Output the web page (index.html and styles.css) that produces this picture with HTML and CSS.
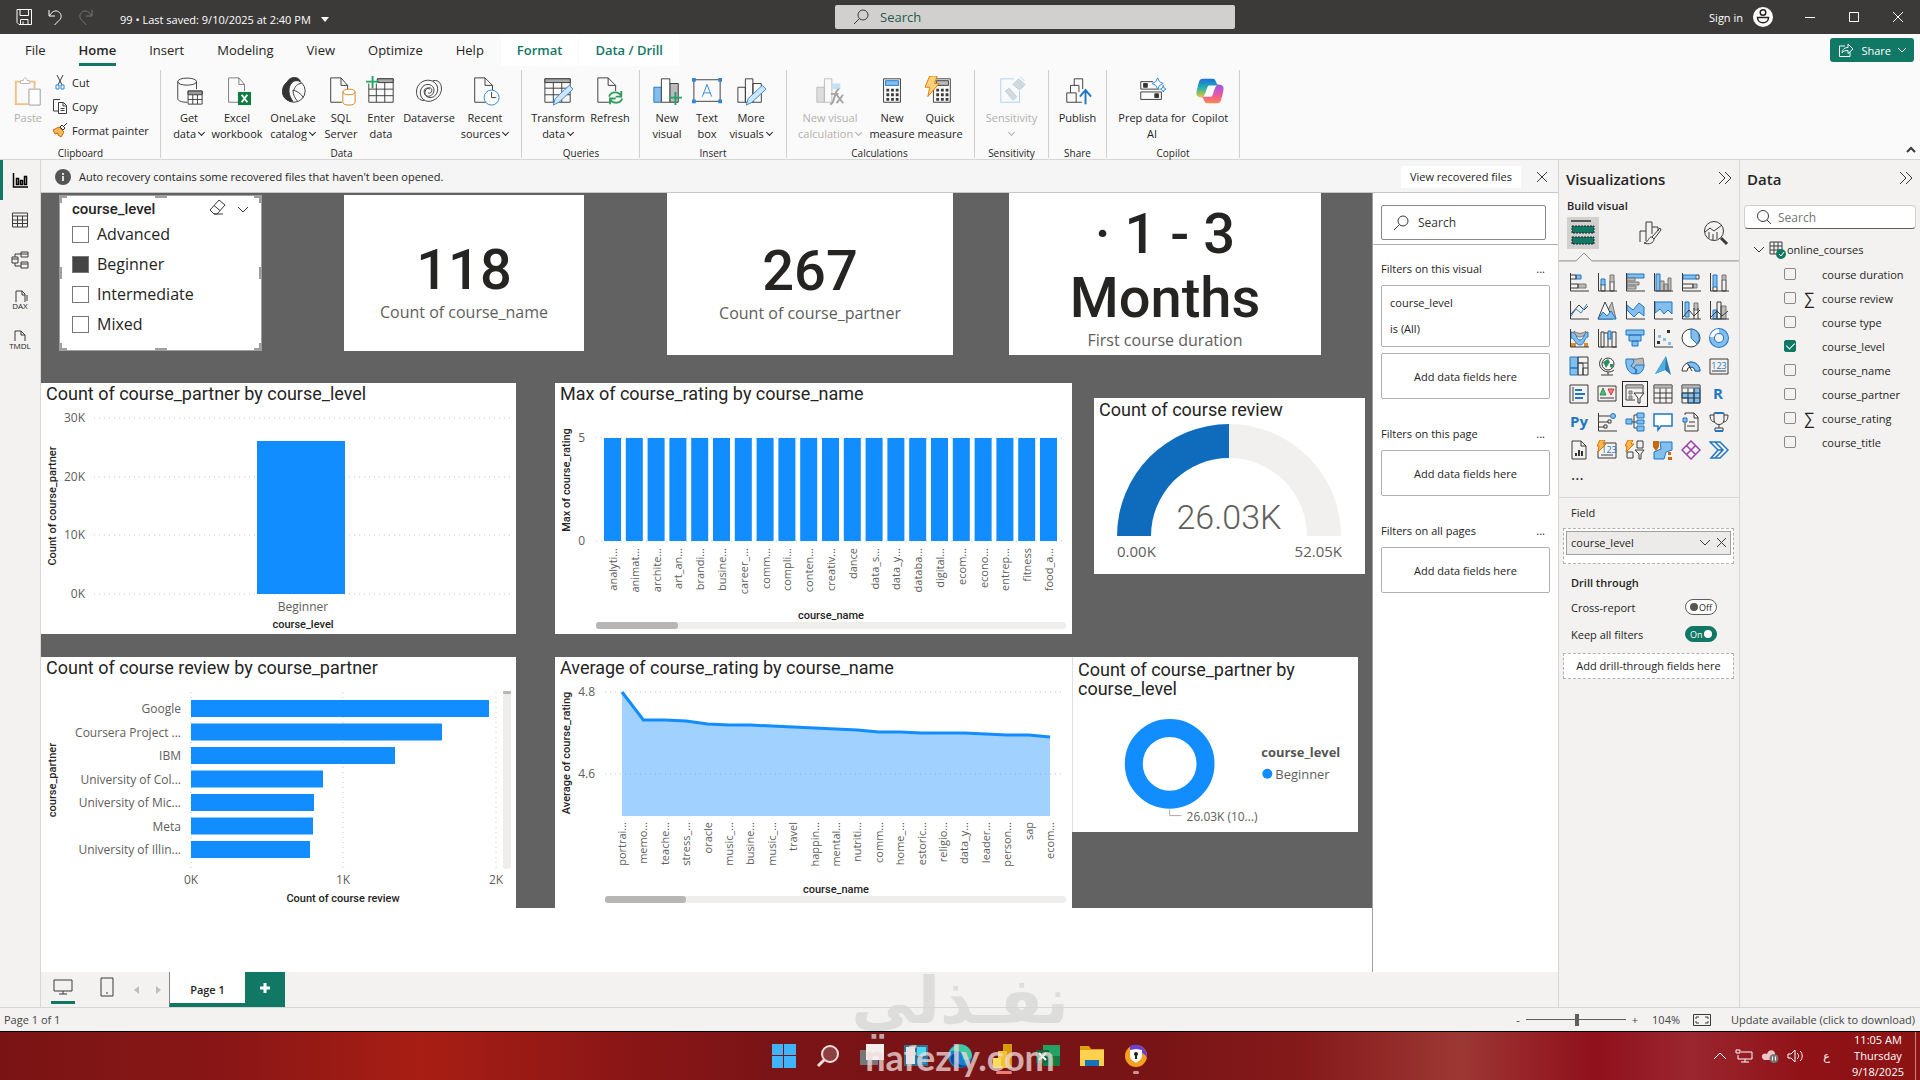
FILE: index.html
```html
<!DOCTYPE html>
<html lang="en">
<head>
  <meta charset="UTF-8">
  <title>99 - Power BI Desktop</title>
  <link rel="stylesheet" href="styles.css">
</head>
<body>
  <header class="titlebar">
    <div class="quick">
      <button aria-label="Save"><svg width="20" height="20" viewBox="0 0 20 20" class="w"><path d="M3 2.500h14.500v15H5l-2-2zM6 2.500v6h8.500v-6M6.500 17.500v-5h7.500v5M9 17v-2.500"/></svg></button>
      <button aria-label="Undo"><svg width="20" height="20" viewBox="0 0 20 20" class="w"><path d="M4 3v6h6M4.500 8.500C8 3 12 3 14.500 5.500s2 6-.5 8L9.500 18"/></svg></button>
      <button aria-label="Redo" class="dim"><svg width="20" height="20" viewBox="0 0 20 20" class="w"><path d="M16 3v6h-6M15.500 8.500C12 3 8 3 5.500 5.500s-2 6 .5 8l4.500 4.500"/></svg></button>
    </div>
    <button class="doc-name">99 • Last saved: 9/10/2025 at 2:40 PM <svg width="8" height="5" viewBox="0 0 8 5"><path d="M0 0h8L4 5z" fill="#fff"/></svg></button>
    <label class="top-search">
      <svg width="18" height="18" viewBox="0 0 18 18" class="k"><circle cx="11" cy="7" r="5"/><path d="M7.500 10.500L2 16"/></svg>
      <input type="text" placeholder="Search" aria-label="Search">
    </label>
    <div class="account">
      <span>Sign in</span>
      <svg width="20" height="20" viewBox="0 0 20 20"><circle cx="10" cy="10" r="10" fill="#fff"/><circle cx="10" cy="5.500" r="2.800" fill="none" stroke="#222" stroke-width="1.500"/><path d="M4.500 10.500h11c0 7-11 7-11 0z" fill="none" stroke="#222" stroke-width="1.500"/></svg>
    </div>
    <div class="win-buttons">
      <button aria-label="Minimize"><svg width="12" height="12" viewBox="0 0 12 12" class="w"><path d="M1 6.500h10"/></svg></button>
      <button aria-label="Maximize"><svg width="12" height="12" viewBox="0 0 12 12" class="w"><path d="M1.500 1.500h9v9h-9z"/></svg></button>
      <button aria-label="Close"><svg width="12" height="12" viewBox="0 0 12 12" class="w"><path d="M1 1l10 10M11 1L1 11"/></svg></button>
    </div>
  </header>

  <section class="ribbon">
    <nav class="tabs">
      <button>File</button>
      <button class="active">Home</button>
      <button>Insert</button>
      <button>Modeling</button>
      <button>View</button>
      <button>Optimize</button>
      <button>Help</button>
      <button class="context">Format</button>
      <button class="context">Data / Drill</button>
      <button class="share"><svg width="18" height="18" viewBox="0 0 18 18" class="w"><path d="M8 5H2.500v10.500H13V11M5 12c.5-4 3-5.500 6-5.500V3l5 5-5 4.500V9.500C8 9.500 6.500 10 5 12z"/></svg> Share <svg width="10" height="8" viewBox="0 0 10 8" class="w"><path d="M1 2l4 4 4-4"/></svg></button>
    </nav>
    <div class="groups">
      <div class="group g-clip">
        <div class="tools">
          <button class="tool off"><svg viewBox="0 0 32 32"><path d="M10 6H3v24h13M23 13V6h-6" fill="none" stroke="#f3c083" stroke-width="2"/><path d="M8 8V5h3c0-4 4-4 4 0h3v3z" fill="#fff" stroke="#b5b3b1"/><path d="M17 14h12v17H17z" fill="#fff" stroke="#9a9896"/></svg>Paste</button>
          <div class="clip-list">
            <button><svg width="16" height="16" viewBox="0 0 16 16" class="k"><path d="M5 1l5 10M11 1L6 11"/><path d="M4 11h3v4H4zM9 11h3v4H9z" stroke="#2b88d8"/></svg>Cut</button>
            <button><svg width="16" height="16" viewBox="0 0 16 16" class="k"><path d="M6 13H1.500V1.500H8M6.500 4.500h5l3 3v8h-8zM11 4.500V8h3M8.500 10.500h4M8.500 12.500h4"/></svg>Copy</button>
            <button><svg width="16" height="16" viewBox="0 0 16 16" class="k"><path d="M1 8l6-3 5 5-3 5-3-2 0-2-3 1z" fill="#f8b65c" stroke="#ca6b09"/><path d="M8 5l2-2 3 3-2 2zM12 4l3-3"/></svg>Format painter</button>
          </div>
        </div>
        <span class="cap">Clipboard</span>
      </div>
      <div class="group g-data">
        <div class="tools">
          <button class="tool"><svg viewBox="0 0 32 32" class="k"><path d="M14 28C8 28 4 26.500 4 24V6c0-5 20-5 20 0v8M4 6c0 5 20 5 20 0"/><path d="M15 16h15v14H15z" fill="#fff"/><path d="M15 16h15v4H15z" fill="#999"/><path d="M15 25h15M20 20v10M25 20v10"/></svg>Get<br>data <i></i></button>
          <button class="tool wide"><svg viewBox="0 0 32 32" class="k"><path d="M18 28H7V2h11l6 7v7M18 2v7h6" stroke="#777"/><path d="M17 17h14v14H17z" fill="#107c41" stroke="none"/><path d="M21 20l6 8M27 20l-6 8" stroke="#fff" stroke-width="2"/></svg>Excel<br>workbook</button>
          <button class="tool wide"><svg viewBox="0 0 32 32" class="k"><ellipse cx="17" cy="16" rx="12" ry="12"/><path d="M10 6c3-6 12-6 14 0-3-2-7-1-9 1-5 5-4 14 1 20C4 27 1 14 10 6z" fill="#333"/><path d="M16 15c4 1 9 4 11 8M17 15c1-4 4-7 8-7M16 15c0 5 2 9 5 12"/></svg>OneLake<br>catalog <i></i></button>
          <button class="tool"><svg viewBox="0 0 32 32" class="k"><path d="M17 28H5V2h11l7 8v5M16 2v8h7"/><path d="M18 17v11c0 4 13 4 13 0V17c0-4-13-4-13 0c0 4 13 4 13 0" stroke="#d8801a" fill="#fff"/></svg>SQL<br>Server</button>
          <button class="tool"><svg viewBox="0 0 32 32" class="k"><path d="M3 8v20h26V3H12M3 14h26M3 21h26M11 8v20M20 6v22"/><path d="M12 3h17v4H12z" fill="#aaa"/><path d="M7 0v13M0 6h14" stroke="#21a366" stroke-width="2"/></svg>Enter<br>data</button>
          <button class="tool wide"><svg viewBox="0 0 32 32" class="k"><path d="M11 26C3 27 1 17 4 11S16 2 22 7c5 4 4 12-1 15s-11-1-9-6 7-4 7-1-2 4-4 3M20 5c9-2 11 8 8 14S16 30 10 25c-5-4-4-12 1-15s12 1 10 7-9 6-10 1 3-6 6-4"/></svg>Dataverse</button>
          <button class="tool wide"><svg viewBox="0 0 32 32" class="k"><path d="M17 28H5V2h11l8 8v5M16 2v8h8"/><circle cx="23" cy="23" r="8" stroke="#2b88d8" fill="#fff"/><path d="M23 17v6h5"/></svg>Recent<br>sources <i></i></button>
        </div>
        <span class="cap">Data</span>
      </div>
      <div class="group g-queries">
        <div class="tools">
          <button class="tool wide"><svg viewBox="0 0 32 32" class="k"><path d="M2 3h27v25H2zM2 13h27M2 20h27M11 6v22M20 6v22"/><path d="M2 3h27v4H2z" fill="#aaa"/><path d="M11 31l2-7 15-14 4 4-15 14z" fill="#cfe6fa" stroke="#2b88d8"/></svg>Transform<br>data <i></i></button>
          <button class="tool mid-w"><svg viewBox="0 0 32 32" class="k"><path d="M16 28H3V2h11l8 8v6M14 2v8h8"/><path d="M15 22c2-6 11-6 13 0M28 16v6h-6M29 24c-2 6-11 6-13 0M16 30v-6h6" stroke="#2f9e5a" stroke-width="2"/></svg>Refresh</button>
        </div>
        <span class="cap">Queries</span>
      </div>
      <div class="group g-insert">
        <div class="tools">
          <button class="tool"><svg viewBox="0 0 32 32" class="k"><path d="M2 12h8v16H2z" fill="#83beec" stroke="#1f77c4"/><path d="M19 8h9v20h-9z" fill="#bbb"/><path d="M10 3h9v25h-9z" fill="#fff"/><path d="M25 17v14M18 23h14" stroke="#21a366" stroke-width="2"/></svg>New<br>visual</button>
          <button class="tool"><svg viewBox="0 0 32 32" class="k"><path d="M2 4h28v23H2z"/><path d="M0 2h4v4H0zM28 2h4v4h-4zM0 25h4v4H0zM28 25h4v4h-4z" fill="#2b88d8" stroke="none"/><path d="M11 22l5-13 5 13M13 18h7" stroke="#2b88d8"/></svg>Text<br>box</button>
          <button class="tool mid-w"><svg viewBox="0 0 32 32" class="k"><path d="M2 12h8v16H2zM10 3h8v25h-8zM18 8h9v20h-9z"/><path d="M11 31l2-7 15-14 4 4-15 14z" fill="#cfe6fa" stroke="#2b88d8"/></svg>More<br>visuals <i></i></button>
        </div>
        <span class="cap">Insert</span>
      </div>
      <div class="group g-calc">
        <div class="tools">
          <button class="tool xwide off"><svg viewBox="0 0 32 32" class="k"><path d="M2 12h8v16H2z" fill="#ddd" stroke="#bbb"/><path d="M10 3h8v25h-8z" stroke="#bbb"/><path d="M18 8h9v6h-9z" fill="#c7e0f4" stroke="none"/><path d="M16 30c5 1 5-17 10-16M17 19h8M23 20l7 9M30 20l-7 9" stroke="#a6a4a2" stroke-width="2"/></svg>New visual<br>calculation <i></i></button>
          <button class="tool mid-w"><svg viewBox="0 0 32 32" class="k"><path d="M7 3h18v25H7z"/><path d="M9 5h14v5H9z" fill="#83beec" stroke="#1f77c4"/><path d="M10 15h13M10 20h13M10 25h13" stroke-width="3" stroke-dasharray="3 2"/></svg>New<br>measure</button>
          <button class="tool mid-w"><svg viewBox="0 0 32 32" class="k"><path d="M9 3h18v25H9z"/><path d="M12 5h13v5H12z" fill="#bbb"/><path d="M12 15h13M12 20h13M12 25h13" stroke-width="3" stroke-dasharray="3 2"/><path d="M5 0h8l-3 8h5L3 22l2-10H0z" fill="#ffd27a" stroke="#e07b00"/></svg>Quick<br>measure</button>
        </div>
        <span class="cap">Calculations</span>
      </div>
      <div class="group g-sens">
        <div class="tools">
          <button class="tool wide off"><svg viewBox="0 0 32 32" class="k"><g stroke="#a9d3f2"><path d="M18 3H4v25h20V16"/><path d="M9 16l4-3 8 9-4 4zM17 9l6-6 7 6-6 6z" fill="#d9d9d9"/><path d="M21 6l7 6M25 1l4 4"/></g></svg>Sensitivity<br><i></i></button>
        </div>
        <span class="cap">Sensitivity</span>
      </div>
      <div class="group g-share">
        <div class="tools">
          <button class="tool mid-w"><svg viewBox="0 0 32 32" class="k"><path d="M4 28V18h10v10H4M8 18v-8h9M12 10V3h9v11M14 28h6M17 10v7"/><path d="M24 30V16M18 22l6-7 6 7" stroke="#1f77c4" stroke-width="2"/></svg>Publish</button>
        </div>
        <span class="cap">Share</span>
      </div>
      <div class="group g-copilot">
        <div class="tools">
          <button class="tool xwide"><svg viewBox="0 0 32 32" class="k"><path d="M17 6H4v8h20M4 17h22v8H4z"/><path d="M7 8h4v4H7zM19 19h4v4h-4z" fill="#333"/><path d="M22 2l2 4 4 2-4 2-2 4-2-4-4-2 4-2zM28 10l1 3 2 1-2 1-1 2-1-2-2-1 2-1z" fill="#fff" stroke="#2b88d8"/></svg>Prep data for<br>AI</button>
          <button class="tool"><svg viewBox="0 0 32 32"><defs><linearGradient id="cp1" x1="0" y1="0" x2="0" y2="1"><stop offset="0" stop-color="#1a6fe0"/><stop offset=".5" stop-color="#27b3a8"/><stop offset="1" stop-color="#f2c62e"/></linearGradient><linearGradient id="cp2" x1="0" y1="0" x2="0" y2="1"><stop offset="0" stop-color="#9b55ee"/><stop offset=".6" stop-color="#ee5a9c"/><stop offset="1" stop-color="#fa8a4a"/></linearGradient></defs><path d="M9 3h10c4 0 3 7 7 7H15c-3 0-3 12-8 13-6 0-6-4-5-8l2-8c1-3 2-4 5-4z" fill="url(#cp1)"/><path d="M23 29H13c-4 0-3-7-7-7h11c3 0 3-12 8-13 6 0 6 4 5 8l-2 8c-1 3-2 4-5 4z" fill="url(#cp2)"/></svg>Copilot</button>
        </div>
        <span class="cap">Copilot</span>
      </div>
      <button class="collapse" aria-label="Collapse ribbon"><svg width="10" height="8" viewBox="0 0 10 8" class="k" stroke-width="2"><path d="M1 6l4-4 4 4"/></svg></button>
    </div>
  </section>

  <main class="work">
    <nav class="rail">
      <button class="active" aria-label="Report view"><svg width="16" height="16" viewBox="0 0 16 16"><path d="M1.500 1v14H16M4.500 6.500h2v6h-2zM8.500 8.500h2v4h-2zM12.500 4.500h2v8h-2z" fill="none" stroke="#000" stroke-width="1.500"/></svg></button>
      <button aria-label="Table view"><svg width="16" height="16" viewBox="0 0 16 16" class="k"><path d="M.5 1h15v14H.5zM.5 4h15M.5 8h15M.5 11.500h15M5.500 4v11M10.500 4v11"/></svg></button>
      <button aria-label="Model view"><svg width="18" height="18" viewBox="0 0 18 18" class="k"><path d="M10 1h7v5h-7zM10 11h7v6h-7zM1 6h6v6H1zM1 8h6M10 3h7M10 13h7M4 6V3h6M4 12v3h6"/></svg></button>
      <button class="file" aria-label="DAX query view"><svg width="16" height="12" viewBox="0 0 16 12" class="k"><path d="M4 12V1h6l3 3v8M10 1v4h3M15 5v6"/></svg><span>DAX</span></button>
      <button class="file" aria-label="TMDL view"><svg width="16" height="12" viewBox="0 0 16 12" class="k"><path d="M3 11V1h6l4 4v6M9 1v4h4"/></svg><span>TMDL</span></button>
    </nav>

    <div class="stage">
      <div class="notice">
        <svg width="16" height="16" viewBox="0 0 16 16"><circle cx="8" cy="8" r="8" fill="#555"/><path d="M8 7v5M8 4v2" stroke="#ddd" stroke-width="2"/></svg>
        <span>Auto recovery contains some recovered files that haven't been opened.</span>
        <button class="recover">View recovered files</button>
        <button class="close" aria-label="Dismiss"><svg width="10" height="10" viewBox="0 0 10 10" class="k"><path d="M0 0l10 10M10 0L0 10"/></svg></button>
      </div>
      <div class="stage-body">
        <div class="canvas">
          <div class="report">
            <div class="row row-cards">
              <div class="visual slicer">
                <span class="h tl"></span><span class="h tc"></span><span class="h tr"></span>
                <span class="h ml"></span><span class="h mr"></span>
                <span class="h bl"></span><span class="h bc"></span><span class="h br"></span>
                <div class="slicer-head"><b>course_level</b>
                  <button aria-label="Clear"><svg width="18" height="16" viewBox="0 0 18 16" class="k"><path d="M10 1l6 5-8 9H5l-4-4zM5 6.500l6 5M5 15h9"/></svg></button>
                  <button aria-label="Expand"><svg width="12" height="8" viewBox="0 0 12 8" class="k"><path d="M1 1l5 5 5-5"/></svg></button>
                </div>
                <label><input type="checkbox">Advanced</label>
                <label><input type="checkbox" checked>Beginner</label>
                <label><input type="checkbox">Intermediate</label>
                <label><input type="checkbox">Mixed</label>
              </div>
              <div class="visual card c1"><strong>118</strong><span>Count of course_name</span></div>
              <div class="visual card c2"><strong>267</strong><span>Count of course_partner</span></div>
              <div class="visual card c3"><strong>· 1 - 3 Months</strong><span>First course duration</span></div>
            </div>

            <div class="row row-charts">
              <div class="visual v1">
                <h2>Count of course_partner by course_level</h2>
                <svg class="chart" viewBox="0 0 475 225">
                  <path class="grid" d="M53 9h418M53 68h418M53 126h418M53 185h418"/>
                  <rect class="bar" x="216" y="32" width="88" height="153"/>
                  <g class="tick end"><text x="44" y="13">30K</text><text x="44" y="72">20K</text><text x="44" y="130">10K</text><text x="44" y="189">0K</text></g>
                  <text class="tick mid" x="262" y="202">Beginner</text>
                  <text class="axis mid" x="262" y="219">course_level</text>
                  <text class="axis mid" transform="translate(15 97) rotate(-90)">Count of course_partner</text>
                </svg>
              </div>
              <div class="visual v2">
                <h2>Max of course_rating by course_name</h2>
                <svg class="chart" id="maxRating" viewBox="0 0 517 225">
                  <path class="grid" d="M41 29h467M41 132h467"/>
                  <g class="tick end"><text x="30" y="33">5</text><text x="30" y="136">0</text></g>
                  <text class="axis mid" x="276" y="210">course_name</text>
                  <text class="axis mid" transform="translate(15 71) rotate(-90)">Max of course_rating</text>
                  <rect class="track" x="41" y="213" width="470" height="7" rx="3"/>
                  <rect class="thumb" x="41" y="213" width="82" height="7" rx="3"/>
                </svg>
              </div>
              <div class="visual v3 gauge">
                <h2>Count of course review</h2>
                <svg class="chart" viewBox="0 0 271 150">
                  <path d="M23 112A112 112 0 0 1 135 0v34a78 78 0 0 0-78 78z" fill="#0f6cbd"/>
                  <path d="M135 0a112 112 0 0 1 112 112h-34a78 78 0 0 0-78-78z" fill="#f1f0ef"/>
                  <text class="gauge-value" x="135" y="105">26.03K</text>
                  <text class="gauge-tick" x="23" y="133">0.00K</text>
                  <text class="gauge-tick end" x="248" y="133">52.05K</text>
                </svg>
              </div>
            </div>

            <div class="row row-charts">
              <div class="visual v1">
                <h2>Count of course review by course_partner</h2>
                <svg class="chart" id="reviews" viewBox="0 0 475 225">
                  <path class="grid" d="M150 9v178M302 9v178M455 9v178"/>
                  <g class="tick mid"><text x="150" y="201">0K</text><text x="302" y="201">1K</text><text x="455" y="201">2K</text></g>
                  <text class="axis mid" x="302" y="219">Count of course review</text>
                  <text class="axis mid" transform="translate(15 97) rotate(-90)">course_partner</text>
                  <rect class="track" x="462" y="8" width="8" height="178" rx="3"/>
                  <rect class="thumb" x="462" y="8" width="8" height="3" rx="1"/>
                </svg>
              </div>
              <div class="visual v2">
                <h2>Average of course_rating by course_name</h2>
                <svg class="chart" id="avgRating" viewBox="0 0 517 225">
                  <path class="grid" d="M50 9h458M50 91h458"/>
                  <g class="tick end"><text x="40" y="13">4.8</text><text x="40" y="95">4.6</text></g>
                  <text class="axis mid" x="281" y="210">course_name</text>
                  <text class="axis mid" transform="translate(15 70) rotate(-90)">Average of course_rating</text>
                  <rect class="track" x="50" y="213" width="461" height="7" rx="3"/>
                  <rect class="thumb" x="50" y="213" width="81" height="7" rx="3"/>
                </svg>
              </div>
              <div class="visual v4">
                <h2>Count of course_partner by course_level</h2>
                <svg class="chart" viewBox="0 0 286 128">
                  <circle cx="97" cy="60" r="36" fill="none" stroke="#118dff" stroke-width="18"/>
                  <path d="M97 106v6h12" fill="none" stroke="#aaa"/>
                  <text class="tick" x="114" y="117">26.03K (10...)</text>
                  <text class="legend-title" x="189" y="53">course_level</text>
                  <circle cx="195" cy="70" r="5" fill="#118dff"/>
                  <text class="legend" x="203" y="75">Beginner</text>
                </svg>
              </div>
            </div>
          </div>
        </div>

        <aside class="filters">
          <div class="filter-search"><label><svg width="18" height="18" viewBox="0 0 18 18" class="k"><circle cx="11" cy="7" r="5"/><path d="M7.500 10.500L2 16"/></svg><input type="text" placeholder="Search" aria-label="Search filters"></label></div>
          <div class="filter-head"><span>Filters on this visual</span><button>...</button></div>
          <div class="filter-card"><span>course_level</span><span>is (All)</span></div>
          <div class="drop">Add data fields here</div>
          <div class="filter-head"><span>Filters on this page</span><button>...</button></div>
          <div class="drop">Add data fields here</div>
          <div class="filter-head"><span>Filters on all pages</span><button>...</button></div>
          <div class="drop">Add data fields here</div>
        </aside>
      </div>
      <div class="pages">
        <button class="device active" aria-label="Desktop layout"><svg width="20" height="16" viewBox="0 0 20 16" class="k"><path d="M1 1h18v11H1zM10 12v3M6 15h8"/></svg></button>
        <button class="device" aria-label="Mobile layout"><svg width="14" height="20" viewBox="0 0 14 20" class="k"><path d="M1 1h12v18H1zM6 16h2"/></svg></button>
        <button class="arrow" aria-label="Previous page"><svg width="5" height="8" viewBox="0 0 5 8"><path d="M5 0v8L0 4z" fill="#c0bebc"/></svg></button>
        <button class="arrow" aria-label="Next page"><svg width="5" height="8" viewBox="0 0 5 8"><path d="M0 0v8l5-4z" fill="#c0bebc"/></svg></button>
        <button class="page">Page 1</button>
        <button class="add" aria-label="New page"><svg width="12" height="12" viewBox="0 0 12 12"><path d="M6 1v10M1 6h10" stroke="#fff" stroke-width="3"/></svg></button>
      </div>
    </div>

    <aside class="viz">
      <div class="pane-head"><h3>Visualizations</h3><button aria-label="Collapse"><svg width="14" height="14" viewBox="0 0 14 14" class="k"><path d="M1 1l6 6-6 6M7 1l6 6-6 6"/></svg></button></div>
      <h4>Build visual</h4>
      <div class="modes">
        <button class="active" aria-label="Build"><svg width="26" height="26" viewBox="0 0 26 26"><path d="M1 1h20" stroke="#333" stroke-width="1.500"/><path d="M2 6h22v7H2zM2 17h22v7H2z" fill="#117865" stroke="#222" stroke-dasharray="2 1"/></svg></button>
        <button aria-label="Format"><svg width="24" height="26" viewBox="0 0 24 26" class="k"><path d="M2 22V11h6V2h6v12M8 11v10M14 7h6v4"/><path d="M22 8l-8 9 2 2 7-9zM14 17c-3-1-4 6-8 6 5 2 10 0 10-4z"/></svg></button>
        <button aria-label="Analytics"><svg width="26" height="26" viewBox="0 0 26 26" class="k"><circle cx="11" cy="11" r="9.500"/><path d="M2 12l5-4 4 3 8-6M6 12v6M10 14v6M14 12v7"/><path d="M18 18l6 6" stroke-width="3"/></svg></button>
      </div>
      <svg class="notch" viewBox="0 0 181 10"><path d="M0 9h17l8-8 8 8h148" fill="none" stroke="#8a8886"/></svg>
      <div class="gallery">
        <button><svg viewBox="0 0 20 20"><path class="b" d="M7 3h5v4H7z"/><path class="g" d="M9 12h8v4H9z"/><path class="k" d="M2 3h5v4H2M2 12h7v4H2M1.500 1v18H20"/></svg></button>
        <button><svg viewBox="0 0 20 20"><path class="k" d="M4 12h4v7H4zM13 9h4v10h-4z"/><path class="b" d="M4 7h4v6H4z"/><path class="g" d="M13 3h4v7h-4z"/><path class="k" d="M1.500 1v18H20"/></svg></button>
        <button><svg viewBox="0 0 20 20"><path class="b" d="M2 2h17v4H2z"/><path class="g" d="M2 6h8v3H2zM2 10h12v3H2zM2 14h9v3H2z"/><path class="k" d="M1.500 1v18H20"/></svg></button>
        <button><svg viewBox="0 0 20 20"><path class="b" d="M3 2h4v17H3z"/><path class="g" d="M7 9h4v10H7zM11 12h4v7h-4zM15 6h3v13h-3z"/><path class="k" d="M1.500 1v18H20"/></svg></button>
        <button><svg viewBox="0 0 20 20"><path class="b" d="M2 3h13v4H2z"/><path class="g" d="M12 12h4v4h-4z"/><path class="k" d="M2 12h10v4H2M15 3h3v4h-3M1.500 1v18H20"/></svg></button>
        <button><svg viewBox="0 0 20 20"><path class="b" d="M4 3h4v12H4z"/><path class="g" d="M13 3h4v5h-4z"/><path class="k" d="M4 15v4h4v-4M13 8v11h4V8M1.500 1v18H20"/></svg></button>

        <button><svg viewBox="0 0 20 20"><path class="k" d="M1.500 1v18H20M2 14l8-9 5 5 4-4"/><path d="M2 16l5-7 5 4 6-9" fill="none" stroke="#2b88d8"/></svg></button>
        <button><svg viewBox="0 0 20 20"><path class="g" d="M9 14l6-12 4 17z"/><path d="M1 19L8 2l8 17z" fill="#fff" stroke="#3b3a39"/><path class="b" d="M1 19l5-7 4 4 4-5 5 8z"/></svg></button>
        <button><svg viewBox="0 0 20 20"><path class="b" d="M2 5l6 5 6-7 5 4v9l-5-4-5 5-7-7z"/><path class="k" d="M1.500 1v18H20"/></svg></button>
        <button><svg viewBox="0 0 20 20"><path class="b" d="M2 2h17v12l-4-4-4 4-4-5-5 4z"/><path class="k" d="M1.500 1v18H20"/></svg></button>
        <button><svg viewBox="0 0 20 20"><path class="b" d="M4 2h4v15H4z"/><path class="g" d="M13 3h4v7h-4z"/><path class="k" d="M13 8v11M17 8v11M1.500 1v18H20M2 17l6-7 5 6 6-6"/></svg></button>
        <button><svg viewBox="0 0 20 20"><path class="b" d="M4 10h4v9H4z"/><path class="g" d="M12 6h5v13h-5z"/><path class="k" d="M8 2h4v17H8zM1.500 1v18H20M2 17l6-6 5 5 6-5"/></svg></button>

        <button><svg viewBox="0 0 20 20"><path d="M2 4c6 0 5 8 9 8s4-8 8-8v5c-4 0-3 8-8 8s-5-7-9-7z" fill="#83beec" stroke="#1f77c4"/><path d="M2 15h5v4H2zM15 15h4v4h-4z" fill="#e08a2a"/><path class="g" d="M5 3c3 3 9 3 12 0-2 8-10 8-12 0z"/><path class="k" d="M1.500 1v18H20"/></svg></button>
        <button><svg viewBox="0 0 20 20"><path class="k" d="M4 4h3v15H4zM7 5h4v14M15 4h4v15h-4zM1.500 1v18H20"/><path class="b" d="M11 3h3v8h-3z"/></svg></button>
        <button><svg viewBox="0 0 20 20"><path class="b" d="M1 2h18v5H1zM4 7h12v6H4zM7 13h6v5H7z"/></svg></button>
        <button><svg viewBox="0 0 20 20"><path d="M14 2h3v3h-3zM4 13h3v3H4z" fill="#333"/><path d="M5 7h3v3H5zM10 10h3v3h-3zM15 14h3v3h-3z" fill="#83beec"/><path class="k" d="M1.500 1v18H20"/></svg></button>
        <button><svg viewBox="0 0 20 20"><circle cx="10" cy="10" r="9" fill="#fff" stroke="#333"/><path class="b" d="M10 1a9 9 0 0 1 6 15l-6-6z"/></svg></button>
        <button><svg viewBox="0 0 20 20"><circle cx="10" cy="10" r="7" fill="none" stroke="#1f77c4" stroke-width="6"/><circle cx="10" cy="10" r="7" fill="none" stroke="#83beec" stroke-width="4"/><path d="M10 3a7 7 0 0 0-7 6" fill="none" stroke="#fff" stroke-width="4"/></svg></button>

        <button><svg viewBox="0 0 20 20"><path class="b" d="M1 1h8v11H1zM1 12h8v7H1z"/><path class="k" d="M9 1h10v6H9zM9 7h5v12H9zM14 12h5v7h-5zM19 7v5"/></svg></button>
        <button><svg viewBox="0 0 20 20"><circle cx="11" cy="8" r="6" fill="#fff" stroke="#333"/><path d="M6 6l5-3 2 3-2 3-2 3zM13 8h4l-2 4-2-1z" fill="#2f8f5b"/><path class="k" d="M5 2c-5 5-2 13 6 14 3 0 5-1 6-2M11 16v3M4 19h12"/></svg></button>
        <button><svg viewBox="0 0 20 20"><path class="g" d="M8 3h4l6-1 1 7-3 7-6 2-4-6z"/><path class="b" d="M1 3h7l1 3-3 4 5 4-1 4C3 18 0 10 1 3zM11 9h8c0 5-3 9-8 9l1-4-3-2z"/></svg></button>
        <button><svg viewBox="0 0 20 20"><path d="M13 0l5 19-6-5-10 4z" fill="#2a78ad"/><path d="M13 0l-1 14-10 4z" fill="#4fb0df"/></svg></button>
        <button><svg viewBox="0 0 20 20"><path d="M1 15a9 9 0 0 1 18 0h-5a4 4 0 0 0-8 0z" fill="#fff" stroke="#3b3a39"/><path class="b" d="M6 7a9 9 0 0 1 13 8h-5a4 4 0 0 0-5-4z"/><path class="k" d="M11 15L7 8"/></svg></button>
        <button><svg viewBox="0 0 20 20"><path class="k" d="M1 3h18v15H1zM3 15h14"/><text x="10" y="13">123</text></svg></button>

        <button><svg viewBox="0 0 20 20"><path class="k" d="M1 1h18v18H1zM4 3v14"/><path d="M6 6h7M6 10h10M6 14h8" stroke="#1f77c4" stroke-width="2"/></svg></button>
        <button><svg viewBox="0 0 20 20"><path class="k" d="M1 2h18v15H1zM3 14h14"/><path d="M3 11l3-7 3 7z" fill="#5ab37b" stroke="#2f8f5b"/><path d="M11 5h6l-3 6z" fill="#f0808a" stroke="#d13438"/></svg></button>
        <button class="picked"><svg viewBox="0 0 20 20"><path class="k" d="M10 16H1V1h17v8"/><path class="g" d="M1 1h17v3H1zM4 7h3v3H4zM4 12h3v3H4z"/><path d="M9 9h10l-4 5v5h-2v-5z" fill="#fff" stroke="#333"/></svg></button>
        <button><svg viewBox="0 0 20 20"><path class="k" d="M1 1h18v18H1zM1 9h18M1 14h18M7 4v15M13 4v15"/><path class="g" d="M1 1h18v3H1z"/></svg></button>
        <button><svg viewBox="0 0 20 20"><path class="b" d="M1 9h12v10H7v-5H1zM13 4h6v15h-6z"/><path class="k" d="M1 1h18v18H1zM1 9h18M1 14h18M7 4v15M13 4v15"/><path class="g" d="M1 1h18v3H1z"/></svg></button>
        <button><svg viewBox="0 0 20 20"><text class="big" x="9" y="15">R</text></svg></button>

        <button><svg viewBox="0 0 20 20"><text class="big" x="10" y="15">Py</text></svg></button>
        <button><svg viewBox="0 0 20 20"><path class="k" d="M1.500 1v18H20M2 4h11M2 10h9M2 15h5M11 8h3v3h-3zM7 13h3v3H7z"/><circle class="b" cx="16" cy="4" r="2.500"/></svg></button>
        <button><svg viewBox="0 0 20 20"><path class="k" d="M7 10h5M12 3H9v13h3"/><path class="b" d="M1 7h6v5H1zM12 1h7v5h-7zM12 8h7v4h-7zM12 14h7v5h-7z"/></svg></button>
        <button><svg viewBox="0 0 20 20"><path d="M1 2h18v12H8l-3 4v-4H1z" fill="#fff" stroke="#1f77c4" stroke-width="1.500"/></svg></button>
        <button><svg viewBox="0 0 20 20"><path class="k" d="M4 10v9h13V5l-4-4H7M4 3V1h3M13 1v5h4M8 10h6M6 14h8"/><path class="b" d="M2 6h4v4H2z"/></svg></button>
        <button><svg viewBox="0 0 20 20"><path class="k" d="M5 1h10v7c0 6-10 6-10 0zM5 3H1c0 5 2 7 5 7M15 3h4c0 5-2 7-5 7M10 13v3M6 16h8v3H6z"/><path d="M6 1h8M6 19h8" stroke="#1f77c4" stroke-width="2"/></svg></button>

        <button><svg viewBox="0 0 20 20"><path class="k" d="M3 1h9l5 5v13H3zM12 1v5h5"/><path d="M7 16v-3M10 16v-6M13 16v-5" stroke="#333" stroke-width="2"/></svg></button>
        <button><svg viewBox="0 0 20 20"><path class="k" d="M7 3h12v15H1v-7M4 15h12"/><text x="12" y="13">123</text><path class="o" d="M3 0h5L6 4h3L1 12l1-6H0z"/></svg></button>
        <button><svg viewBox="0 0 20 20"><path class="k" d="M12 1h6v7h-6zM2 12h6v6H2zM10 10h9l-3 4v5h-2v-5z"/><path class="o" d="M3 0h5L6 4h3L1 12l1-6H0z"/></svg></button>
        <button><svg viewBox="0 0 20 20"><path class="b" d="M7 2h12v8l-6 2-2 7H1v-7l7-3z"/><path d="M0 1h6v6l-3 4-3-4zM15 12h3v3h-3zM15 17h4v3h-4z" fill="#c8690f"/></svg></button>
        <button><svg viewBox="0 0 20 20"><path d="M10 1l9 9-9 9-9-9zM5.500 5.500l9 9M14.500 5.500l-9 9" fill="none" stroke="#9b3fa8" stroke-width="1.500"/></svg></button>
        <button><svg viewBox="0 0 20 20"><path d="M1 2h10l8 8-8 8H2l7-8zM6 2l8 8-8 8M9 10h5" fill="none" stroke="#1f77c4" stroke-width="1.500"/></svg></button>
      </div>
      <button class="more">...</button>
      <div class="wells">
        <h5>Field</h5>
        <div class="well"><div class="pill"><span>course_level</span><button aria-label="Options"><svg width="12" height="8" viewBox="0 0 12 8" class="k"><path d="M1 1l5 5 5-5"/></svg></button><button aria-label="Remove"><svg width="9" height="9" viewBox="0 0 9 9" class="k"><path d="M0 0l9 9M9 0L0 9"/></svg></button></div></div>
        <h5 class="strong">Drill through</h5>
        <div class="switch-row"><span>Cross-report</span><label class="switch"><input type="checkbox" aria-label="Cross-report">Off</label></div>
        <div class="switch-row"><span>Keep all filters</span><label class="switch on"><input type="checkbox" checked aria-label="Keep all filters">On</label></div>
        <div class="well drill">Add drill-through fields here</div>
      </div>
    </aside>

    <aside class="data">
      <div class="pane-head"><h3>Data</h3><button aria-label="Collapse"><svg width="14" height="14" viewBox="0 0 14 14" class="k"><path d="M1 1l6 6-6 6M7 1l6 6-6 6"/></svg></button></div>
      <label class="data-search"><svg width="16" height="16" viewBox="0 0 16 16" class="k"><circle cx="7" cy="7" r="5.500"/><path d="M11 11l4 4"/></svg><input type="text" placeholder="Search" aria-label="Search fields"></label>
      <div class="table-name"><svg width="12" height="8" viewBox="0 0 12 8" class="k"><path d="M1 1l5 5 5-5"/></svg><svg width="18" height="18" viewBox="0 0 18 18" class="k"><path d="M1 1h12v12H1zM1 5h12M1 9h12M5 1v12M9 1v12"/><circle cx="12" cy="13" r="5" fill="#117865" stroke="none"/><path d="M10 13l2 2 3-4" stroke="#fff"/></svg>online_courses</div>
      <ul class="fields">
        <li><label><input type="checkbox"><b></b>course duration</label></li>
        <li><label><input type="checkbox"><b>∑</b>course review</label></li>
        <li><label><input type="checkbox"><b></b>course type</label></li>
        <li><label><input type="checkbox" checked><b></b>course_level</label></li>
        <li><label><input type="checkbox"><b></b>course_name</label></li>
        <li><label><input type="checkbox"><b></b>course_partner</label></li>
        <li><label><input type="checkbox"><b>∑</b>course_rating</label></li>
        <li><label><input type="checkbox"><b></b>course_title</label></li>
      </ul>
    </aside>
  </main>

  <footer class="status">
    <span>Page 1 of 1</span>
    <div class="zoom"><button>-</button><input type="range" min="0" max="100" value="51" aria-label="Zoom"><button>+</button><span>104%</span>
      <button aria-label="Fit to page"><svg width="18" height="12" viewBox="0 0 18 12" class="k"><path d="M.5.5h17v11H.5zM3 5V3h3M12 3h3v2M3 7v2h3M12 9h3V7"/></svg></button></div>
    <a href="#">Update available (click to download)</a>
  </footer>

  <footer class="taskbar">
    <div class="apps">
      <button aria-label="Start"><svg viewBox="0 0 24 24"><path d="M0 0h11v11H0zM12 0h12v11H12zM0 12h11v12H0zM12 12h12v12H12z" fill="#3fb4fb"/></svg></button>
      <button aria-label="Search"><svg viewBox="0 0 24 24"><circle cx="14" cy="10" r="8" fill="#8c4040" stroke="#f3dede" stroke-width="2"/><path d="M8 16l-6 6" stroke="#f3dede" stroke-width="3"/></svg></button>
      <button aria-label="Task view"><svg viewBox="0 0 24 24"><path d="M0 6h18v15H0z" fill="#777"/><path d="M6 0h18v16H6z" fill="#f4eeee"/></svg></button>
      <button aria-label="Widgets"><svg viewBox="0 0 24 24"><path d="M0 1h24v21H0z" fill="#35718c"/><path d="M2 3h9v17H2z" fill="#dfe9ee"/><path d="M13 3h9v9h-9z" fill="#4cd4f4"/><path d="M13 14h9v6h-9z" fill="#2892d4"/></svg></button>
      <button aria-label="Edge"><svg viewBox="0 0 24 24"><circle cx="12" cy="12" r="12" fill="#1682cf"/><path d="M1 8C6-3 22-2 24 11c0 5-5 6-9 4 3-5-5-11-14-7z" fill="#42c9a0"/><path d="M8 11c-4 7 4 12 12 10C12 27 1 21 3 13c1-3 3-4 5-2z" fill="#0b4a93"/></svg></button>
      <button class="current" aria-label="Power BI"><svg viewBox="0 0 24 24"><path d="M11 0h9v24h-9z" fill="#d49a10"/><path d="M6 7h9v17H6z" fill="#f2c42c"/><path d="M1 14h8v10H1z" fill="#f8dc62"/></svg></button>
      <button aria-label="Excel"><svg viewBox="0 0 24 24"><path d="M7 1h17v21H7z" fill="#21a366"/><path d="M7 12h17v10H7z" fill="#107c41"/><path d="M0 6h13v13H0z" fill="#0f6a38"/><path d="M3 9l7 7M10 9l-7 7" stroke="#fff" stroke-width="2"/></svg></button>
      <button aria-label="File Explorer"><svg viewBox="0 0 24 24"><path d="M0 2h9l2 3h13v17H0z" fill="#e0a010"/><path d="M0 6h24v16H0z" fill="#fdd04e"/><path d="M5 16h14v6H5z" fill="#1672b8"/></svg></button>
      <button class="open" aria-label="Browser"><svg viewBox="0 0 24 24"><circle cx="12" cy="12" r="11" fill="#f7a020"/><path d="M6 2c8-4 18 2 17 12-2-5-8-7-17-8z" fill="#6b3fd0"/><path d="M6 6l6-1 6 1v6c0 4-4 5-6 7-2-2-6-3-6-7z" fill="#fff"/><circle cx="12" cy="10" r="2" fill="#222"/><path d="M11 10h2v5h-2z" fill="#222"/></svg></button>
    </div>
    <div class="tray">
      <svg width="14" height="8" viewBox="0 0 14 8" class="w"><path d="M1 7l6-6 6 6"/></svg>
      <svg width="18" height="14" viewBox="0 0 18 14" class="w"><path d="M6 3h11v7H3V6M10 10v3M6 13h8M1 1h4v3H1z"/></svg>
      <svg width="18" height="14" viewBox="0 0 18 14"><path d="M3 11c-5-4 0-8 3-6 2-6 9-4 8 1v5z" fill="#ecc6c8"/><circle cx="13" cy="9.500" r="4.500" fill="#777"/><path d="M11.500 7.500v4M14.500 7.500v4" stroke="#fff"/></svg>
      <svg width="18" height="14" viewBox="0 0 18 14" class="w"><path d="M1 5h3l4-4v12L4 9H1zM10 4c2 2 2 4 0 6M13 2c3 3 3 7 0 10"/></svg>
      <span class="lang">ع</span>
      <div class="clock"><span>11:05 AM</span><span>Thursday</span><span>9/18/2025</span></div>
    </div>
    <div class="mark"><span class="mark-ar" lang="ar">نفـذلي</span><span class="mark-en">nafezly.com</span></div>
  </footer>

  <script src="charts.js"></script>
</body>
</html>
```
FILE: styles.css
```css
* {
  box-sizing: border-box;
}
body {
  margin: 0;
  height: 100vh;
  display: flex;
  flex-direction: column;
  overflow: hidden;
  font-family: "Open Sans", "Noto Sans", sans-serif;
  font-size: 11px;
  color: #252423;
  background: #fff;
}
button {
  font: inherit;
  color: inherit;
  background: none;
  border: 0;
  padding: 0;
}
input {
  font: inherit;
  margin: 0;
}
h2, h3, h4, h5 {
  margin: 0;
}
svg {
  flex: none;
}
.k {
  fill: none;
  stroke: #3b3a39;
}
.w {
  fill: none;
  stroke: #fff;
}
.b {
  fill: #83beec;
  stroke: #1f77c4;
}
.g {
  fill: #bbb;
  stroke: #777;
}
.o {
  fill: #ffb84d;
  stroke: #d8700a;
}

/* title bar */
.titlebar {
  display: flex;
  align-items: center;
  height: 34px;
  flex: none;
  background: #3b3a39;
  color: #fff;
  position: relative;
}
.quick {
  display: flex;
  gap: 11px;
  padding-left: 14px;
}
.quick button {
  height: 20px;
}
.dim {
  opacity: 0.3;
}
.doc-name {
  display: flex;
  align-items: center;
  gap: 10px;
  margin-left: 24px;
  padding-top: 5px;
}
.top-search {
  position: absolute;
  left: 50%;
  top: 5px;
  width: 400px;
  height: 24px;
  margin-left: -125px;
  display: flex;
  align-items: center;
  gap: 10px;
  padding-left: 17px;
  background: #d2d0ce;
  border-radius: 2px;
}
.top-search input, .filters input, .data-search input {
  border: 0;
  background: none;
  outline: 0;
  width: 100%;
  min-width: 0;
  padding: 0;
}
.top-search input {
  font-size: 13px;
}
.top-search input::placeholder {
  color: #1d5c4e;
}
.account {
  margin-left: auto;
  display: flex;
  align-items: center;
  gap: 10px;
}
.win-buttons {
  display: flex;
  gap: 32px;
  margin: 0 16px 0 31px;
}
.win-buttons button {
  height: 12px;
  width: 12px;
}

/* ribbon */
.ribbon {
  flex: none;
  height: 126px;
  background: #fafafa;
  border-bottom: 1px solid #d8d6d4;
}
.tabs {
  display: flex;
  gap: 1px;
  height: 34px;
  padding-left: 9px;
  font-size: 13px;
}
.tabs button {
  padding: 0 16px;
  height: 32px;
}
.tabs .active {
  font-weight: 600;
  position: relative;
}
.tabs .active::after {
  content: "";
  position: absolute;
  left: 16px;
  right: 16px;
  bottom: 0;
  height: 3px;
  background: #117865;
}
.tabs .context {
  color: #117865;
  font-weight: 600;
  background: #fff;
}
.tabs .share {
  margin: 4px 6px 0 auto;
  height: 24px;
  padding: 0 7px;
  display: flex;
  align-items: center;
  gap: 6px;
  font-size: 11px;
  color: #fff;
  background: #117865;
  border-radius: 3px;
}
.groups {
  display: flex;
  align-items: flex-start;
  padding-top: 2px;
}
.group {
  height: 88px;
  border-right: 1px solid #d2d0ce;
  display: flex;
  flex-direction: column;
  justify-content: space-between;
  padding: 6px 7px 0;
}
.g-clip { width: 161px; padding-left: 8px; }
.g-data { width: 361px; padding-left: 8px; }
.g-queries { width: 118px; padding-left: 8px; }
.g-insert { width: 147px; }
.g-calc { width: 188px; padding-left: 5px; }
.g-sens { width: 74px; }
.g-share { width: 58px; padding-left: 4px; padding-right: 4px; }
.g-copilot { width: 133px; }
.tools {
  display: flex;
  align-items: flex-start;
}
.g-sens .tools, .g-share .tools {
  justify-content: center;
}
.tool {
  width: 40px;
  flex: none;
  line-height: 16px;
  white-space: nowrap;
  display: block;
}
.tool.mid-w { width: 48px; }
.tool.wide { width: 56px; }
.tool.xwide { width: 76px; }
.tool svg {
  display: block;
  width: 30px;
  height: 30px;
  margin: 0 auto 4px;
}
.tool i {
  display: inline-block;
  width: 5px;
  height: 5px;
  margin: 0 1px 3px 0;
  border-right: 1px solid;
  border-bottom: 1px solid;
  transform: rotate(45deg);
}
.tool.off {
  color: #b3b0ad;
}
.clip-list {
  display: flex;
  flex-direction: column;
  gap: 8px;
  padding-left: 4px;
  margin-top: -2px;
}
.clip-list button {
  display: flex;
  align-items: center;
  gap: 4px;
  height: 16px;
  white-space: nowrap;
}
.cap {
  font-size: 10px;
  line-height: 10px;
  text-align: center;
}
.collapse {
  margin: 76px 4px 0 auto;
  height: 8px;
}
.collapse svg {
  display: block;
}

/* work area */
.work {
  flex: 1;
  min-height: 0;
  display: flex;
  background: #f3f2f1;
}
.rail {
  width: 41px;
  flex: none;
  border-right: 1px solid #d8d6d4;
}
.rail button {
  width: 100%;
  height: 40px;
  display: flex;
  flex-direction: column;
  align-items: center;
  justify-content: center;
  border-left: 3px solid transparent;
  padding-right: 3px;
}
.rail .active {
  border-color: #117865;
}
.file span {
  font-size: 8px;
  line-height: 8px;
}
.stage {
  flex: 1;
  min-width: 0;
  display: flex;
  flex-direction: column;
}
.notice {
  height: 33px;
  flex: none;
  display: flex;
  align-items: center;
  gap: 8px;
  padding: 1px 11px 0 14px;
  background: #f5f5f5;
  border-bottom: 1px solid #c8c6c4;
}
.recover {
  margin-left: auto;
  height: 22px;
  padding: 0 9px;
  background: #fff;
}
.close {
  width: 10px;
  height: 10px;
  margin-left: 8px;
  display: flex;
}
.stage-body {
  flex: 1;
  min-height: 0;
  display: flex;
}
.canvas {
  flex: 1;
  min-width: 0;
  background: #fff;
}
.report {
  background: #626262;
}
.row {
  display: grid;
  align-items: start;
}
.row-cards {
  grid-template-columns: 18fr 203fr 82fr 240fr 83fr 286fr 56fr 312fr 51fr;
  padding-bottom: 28px;
}
.row-charts {
  grid-template-columns: 475fr 39fr 517fr 22fr 271fr 7fr;
}
.row-charts + .row-charts {
  grid-template-columns: 475fr 39fr 517fr 286fr 14fr;
  padding-top: 23px;
}
.visual {
  background: #fff;
}
.v1 { grid-column: 1; }
.v2 { grid-column: 3; }
.v3 { grid-column: 5; }
.v4 { grid-column: 4; border-left: 1px solid #e1dfdd; }
.visual h2 {
  font-family: Roboto, sans-serif;
  font-size: 18px;
  line-height: 18px;
  font-weight: 400;
  padding: 2px 5px 6px;
}
.v4 h2 {
  line-height: 19px;
  padding-top: 3px;
}
.chart {
  display: block;
  width: 100%;
  height: auto;
}
.slicer {
  grid-column: 2;
  position: relative;
  margin-top: 2px;
  min-height: 156px;
  padding: 3px 12px;
  border: 1px solid #a19f9d;
}
.slicer-head {
  display: flex;
  align-items: center;
  gap: 10px;
  height: 20px;
  font-family: Roboto, sans-serif;
  font-size: 15px;
}
.slicer-head b {
  flex: 1;
  font-weight: 500;
}
.slicer label {
  display: flex;
  align-items: center;
  gap: 8px;
  height: 30px;
  font-size: 16px;
}
.slicer input {
  appearance: none;
  width: 17px;
  height: 17px;
  border: 1px solid #777;
}
.slicer input:checked {
  background: #444;
}
/* resize handles of the selected visual */
.h {
  position: absolute;
  width: 8px;
  height: 8px;
  border: 0 solid #a19f9d;
}
.tl { left: -1px; top: -1px; border-width: 3px 0 0 3px; }
.tr { right: -1px; top: -1px; border-width: 3px 3px 0 0; }
.bl { left: -1px; bottom: -1px; border-width: 0 0 3px 3px; }
.br { right: -1px; bottom: -1px; border-width: 0 3px 3px 0; }
.tc, .bc { left: 50%; width: 12px; height: 3px; margin-left: -6px; background: #a19f9d; }
.tc { top: -1px; }
.bc { bottom: -1px; }
.ml, .mr { top: 50%; height: 12px; width: 3px; margin-top: -6px; background: #a19f9d; }
.ml { left: -1px; }
.mr { right: -1px; }
.card {
  display: flex;
  flex-direction: column;
  align-items: center;
  justify-content: center;
  min-height: 162px;
  text-align: center;
}
.card strong {
  font-family: Roboto, sans-serif;
  font-weight: 500;
  font-size: 56px;
  line-height: 64px;
}
.card span {
  font-size: 16px;
  line-height: 20px;
  color: #605e5c;
}
.c1 { grid-column: 4; min-height: 156px; margin-top: 2px; }
.c2 { grid-column: 6; }
.c3 { grid-column: 8; padding: 4px 50px 0; }
.c1, .c2 { padding-top: 14px; }

/* chart parts */
.grid {
  stroke: #c8c6c4;
  stroke-dasharray: 1 4;
}
.bar {
  fill: #118dff;
}
.area {
  fill: #118dff;
  fill-opacity: 0.4;
}
.line {
  fill: none;
  stroke: #118dff;
  stroke-width: 3;
}
.track {
  fill: #efeeed;
}
.thumb {
  fill: #b8b6b4;
}
.tick {
  font-size: 12px;
  fill: #605e5c;
}
.tick.upright {
  font-size: 11px;
}
.axis {
  font-family: Roboto, sans-serif;
  font-size: 11px;
  font-weight: 500;
  fill: #252423;
}
.mid {
  text-anchor: middle;
}
.end {
  text-anchor: end;
}
.gauge {
  margin-top: 15px;
}
.gauge h2 {
  padding-top: 3px;
  padding-bottom: 5px;
}
.gauge-value {
  font-family: Roboto, sans-serif;
  font-weight: 300;
  font-size: 34px;
  text-anchor: middle;
  fill: #605e5c;
}
.gauge-tick {
  font-size: 15px;
  fill: #605e5c;
}
.legend {
  font-size: 13px;
  fill: #605e5c;
}
.legend-title {
  font-size: 13px;
  font-weight: 700;
  fill: #555;
}

/* filters */
.filters {
  width: 186px;
  flex: none;
  background: #fff;
  border-left: 1px solid #a19f9d;
}
.filter-search {
  padding: 12px 12px 4px 8px;
  border-bottom: 1px solid #b3b0ad;
  margin-bottom: 7px;
}
.filter-search label {
  display: flex;
  align-items: center;
  gap: 8px;
  height: 35px;
  padding-left: 10px;
  border: 1px solid #8a8886;
  border-radius: 2px;
}
.filter-search input {
  font-size: 12px;
}
.filter-search input::placeholder {
  color: #333;
}
.filter-head {
  display: flex;
  justify-content: space-between;
  align-items: center;
  height: 33px;
  margin: 0 13px 0 8px;
}
.filter-card, .drop {
  margin: 0 8px 6px;
  border: 1px solid #b3b0ad;
  border-radius: 2px;
}
.filter-card {
  height: 62px;
  padding: 4px 8px;
  display: flex;
  flex-direction: column;
  line-height: 26px;
}
.drop {
  height: 46px;
  display: flex;
  align-items: center;
  justify-content: center;
}
.drop + .filter-head {
  margin-top: 18px;
}

/* page tabs */
.pages {
  flex: none;
  height: 35px;
  display: flex;
  align-items: stretch;
  background: #f3f2f1;
}
.device {
  width: 24px;
  margin: 0 6px 3px 10px;
  border-bottom: 3px solid transparent;
}
.device + .device {
  margin-left: 14px;
}
.device svg {
  vertical-align: middle;
}
.device.active {
  border-color: #117865;
}
.arrow {
  width: 22px;
}
.page {
  width: 76px;
  background: #fff;
  border-left: 1px solid #8a8886;
  border-bottom: 4px solid #117865;
  padding-top: 4px;
  font-weight: 600;
}
.add {
  width: 40px;
  background: #117865;
}

/* visualizations */
.viz, .data {
  width: 181px;
  flex: none;
  border-left: 1px solid #d8d6d4;
}
.pane-head {
  display: flex;
  align-items: center;
  justify-content: space-between;
  height: 38px;
  padding: 0 7px;
}
.pane-head h3 {
  font-size: 15px;
  font-weight: 600;
}
.viz h4 {
  font-size: 11px;
  font-weight: 600;
  line-height: 12px;
  padding: 2px 8px 5px;
}
.modes {
  display: flex;
  justify-content: space-between;
  padding: 0 7px 3px 8px;
}
.modes button {
  width: 32px;
  height: 32px;
  display: flex;
  align-items: center;
  justify-content: center;
}
.modes .active {
  background: #d2d0ce;
}
.notch {
  display: block;
  width: 100%;
}
.gallery {
  display: grid;
  grid-template-columns: repeat(6, 28px);
  padding: 6px 0 0 6px;
}
.gallery button {
  height: 28px;
  padding: 4px;
}
.gallery svg {
  display: block;
  width: 20px;
  height: 20px;
}
.gallery text {
  font-size: 9px;
  text-anchor: middle;
  fill: #1f77c4;
}
.gallery .big {
  font-size: 15px;
  font-weight: 700;
}
.picked {
  outline: 1px solid #252423;
  outline-offset: -2px;
}
.more {
  display: block;
  margin-left: 12px;
  height: 20px;
  font-size: 16px;
  line-height: 12px;
}
.wells {
  border-top: 1px solid #d8d6d4;
  margin-top: 13px;
  padding: 0 5px 0 4px;
}
.wells h5 {
  font-size: 11px;
  font-weight: 400;
  line-height: 30px;
  padding-left: 8px;
}
.wells .strong {
  font-weight: 600;
  line-height: 38px;
  height: 30px;
}
.well {
  border: 1px dashed #b3b0ad;
  background: #fff;
  height: 36px;
  padding: 2px;
}
.pill {
  display: flex;
  align-items: center;
  gap: 6px;
  height: 24px;
  padding: 0 4px;
  background: #edebe9;
  border: 1px solid #a19f9d;
}
.pill span {
  flex: 1;
}
.switch-row {
  display: flex;
  justify-content: space-between;
  align-items: center;
  height: 27px;
  padding: 0 17px 0 8px;
}
.switch {
  display: flex;
  align-items: center;
  justify-content: space-between;
  width: 32px;
  height: 16px;
  padding: 0 4px;
  border: 1px solid #605e5c;
  border-radius: 8px;
  background: #fff;
  font-size: 9px;
}
.switch input {
  appearance: none;
  width: 8px;
  height: 8px;
  border-radius: 50%;
  background: #555;
}
.switch.on {
  flex-direction: row-reverse;
  color: #fff;
  background: #117865;
  border-color: #117865;
}
.switch.on input {
  background: #fff;
}
.well.drill {
  height: 26px;
  margin-top: 5px;
  display: flex;
  align-items: center;
  justify-content: center;
}

/* data */
.data-search {
  display: flex;
  align-items: center;
  gap: 6px;
  height: 24px;
  margin: 7px 4px 8px;
  padding-left: 11px;
  background: #fff;
  border: 1px solid #d2d0ce;
  border-bottom-color: #605e5c;
  border-radius: 4px;
}
.data-search input {
  font-size: 12px;
}
.table-name {
  display: flex;
  align-items: center;
  height: 25px;
  padding-left: 13px;
  gap: 4px;
}
.table-name svg + svg {
  margin-right: -4px;
}
.fields {
  list-style: none;
  margin: 0;
  padding: 0 0 0 44px;
}
.fields label {
  display: flex;
  align-items: center;
  height: 24px;
}
.fields b {
  width: 26px;
  padding-left: 8px;
  font-size: 16px;
  font-weight: 400;
  line-height: 16px;
}
.fields input {
  appearance: none;
  width: 12px;
  height: 12px;
  border: 1px solid #8a8886;
  border-radius: 2px;
}
.fields input:checked {
  background: #117865;
  border-color: #117865;
  display: flex;
  justify-content: center;
}
.fields input:checked::after {
  content: "";
  width: 4px;
  height: 7px;
  border: solid #fff;
  border-width: 0 1px 1px 0;
  transform: rotate(45deg);
}

/* status bar */
.status {
  flex: none;
  height: 24px;
  display: flex;
  align-items: center;
  padding: 0 5px 0 4px;
  background: #f3f2f1;
  border-top: 1px solid #d8d6d4;
  color: #444;
}
.zoom {
  margin-left: auto;
  display: flex;
  align-items: center;
  gap: 6px;
}
.zoom span {
  padding: 0 7px 0 8px;
}
.zoom svg {
  display: block;
}
.zoom input {
  appearance: none;
  width: 100px;
  height: 12px;
  background: linear-gradient(#605e5c, #605e5c) center / 100% 1px no-repeat;
}
.zoom input::-webkit-slider-thumb {
  appearance: none;
  width: 4px;
  height: 12px;
  background: #605e5c;
}
.status a {
  color: inherit;
  text-decoration: none;
  margin-left: 20px;
}

/* taskbar */
.taskbar {
  flex: none;
  height: 49px;
  position: relative;
  display: flex;
  justify-content: center;
  border-top: 1px solid #000;
  color: #fff;
  background: linear-gradient(90deg, #7a1414, #8a1616 12%, #a81e14 22%, #8c1616 32%, #7a1416 40%, #781416 60%, #861a1a 68%, #9c3834 76%, #90101c 83%, #9a2630 88%, #901216 94%, #8c1414);
}
.apps {
  display: flex;
  align-items: center;
  gap: 20px;
}
.apps button {
  width: 24px;
  height: 24px;
  position: relative;
}
.apps svg {
  width: 24px;
  height: 24px;
}
.current::after, .open::after {
  content: "";
  position: absolute;
  left: 4px;
  bottom: -6px;
  width: 16px;
  height: 3px;
  border-radius: 2px;
  background: #ef7d74;
}
.open::after {
  left: 9px;
  width: 6px;
  background: #c99a9a;
}
.tray {
  position: absolute;
  right: 4px;
  top: 0;
  height: 100%;
  display: flex;
  align-items: center;
  gap: 8px;
  border-right: 1px solid #c98080;
  padding-right: 11px;
}
.lang {
  font-family: "DejaVu Sans", sans-serif;
  padding: 0 14px 0 10px;
}
.clock {
  display: flex;
  flex-direction: column;
  text-align: center;
  line-height: 16px;
}
.mark {
  position: absolute;
  left: 50%;
  bottom: 3px;
  width: 212px;
  margin-left: -106px;
  display: flex;
  flex-direction: column;
  align-items: center;
  pointer-events: none;
}
.mark-ar {
  font-family: "DejaVu Sans", sans-serif;
  font-weight: 700;
  font-size: 64px;
  line-height: 72px;
  color: #d6d6d6;
  opacity: 0.75;
}
.mark-en {
  font-family: Lato, sans-serif;
  font-weight: 700;
  font-size: 36px;
  line-height: 40px;
  color: #f0dcdc;
  opacity: 0.75;
}
```
FILE: charts.js
```javascript
const NS = 'http://www.w3.org/2000/svg';

function add(parent, tag, attrs, text) {
  const el = document.createElementNS(NS, tag);
  for (const key in attrs) el.setAttribute(key, attrs[key]);
  if (text) el.textContent = text;
  parent.appendChild(el);
}

// category labels turned to read upwards, ending at the axis
function verticalLabels(svg, names, x0, step, y) {
  names.forEach((name, i) => {
    const x = Math.round(x0 + i * step);
    add(svg, 'text', { class: 'tick end upright', transform: `translate(${x} ${y}) rotate(-90)` }, name);
  });
}

const maxRating = document.getElementById('maxRating');
const courses = ['analyti...', 'animat...', 'archite...', 'art_an...', 'brandi...', 'busine...', 'career_...',
  'comm...', 'compli...', 'conten...', 'creativ...', 'dance', 'data_s...', 'data_y...', 'databa...', 'digital...',
  'ecom...', 'econo...', 'entrep...', 'fitness', 'food_a...'];
courses.forEach((name, i) => {
  add(maxRating, 'rect', { class: 'bar', x: 49 + i * 21.8, y: 29, width: 17, height: 103 });
});
verticalLabels(maxRating, courses, 62, 21.8, 139);

const reviews = document.getElementById('reviews');
const partners = [['Google', 298], ['Coursera Project ...', 251], ['IBM', 204], ['University of Col...', 132],
  ['University of Mic...', 123], ['Meta', 122], ['University of Illin...', 119]];
partners.forEach(([name, width], i) => {
  const y = 17 + i * 23.5;
  add(reviews, 'rect', { class: 'bar', x: 150, y, width, height: 17 });
  add(reviews, 'text', { class: 'tick end', x: 140, y: y + 13 }, name);
});

const avgRating = document.getElementById('avgRating');
const ratings = [9, 37, 37, 38, 41, 42, 42, 43, 44, 45, 46, 47, 49, 49, 50, 50, 50, 51, 52, 52, 54];
const points = ratings.map((y, i) => `${67 + i * 21.4},${y}`).join(' ');
add(avgRating, 'polygon', { class: 'area', points: `67,133 ${points} 495,133` });
add(avgRating, 'polyline', { class: 'line', points });
verticalLabels(avgRating, ['portrai...', 'memo...', 'teache...', 'stress_...', 'oracle', 'music_...', 'busine...',
  'music_...', 'travel', 'happin...', 'mental...', 'nutriti...', 'comm...', 'home_...', 'estoric...', 'religio...',
  'data_y...', 'leader...', 'person...', 'sap', 'ecom...'], 71, 21.4, 139);
```
